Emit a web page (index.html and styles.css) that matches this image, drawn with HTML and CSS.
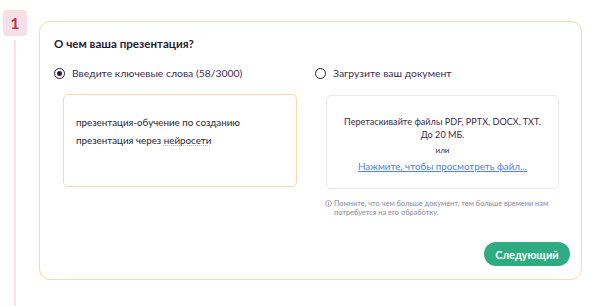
FILE: index.html
```html
<!DOCTYPE html>
<html lang="ru">
<head>
<meta charset="utf-8">
<link rel="stylesheet" href="styles.css">
</head>
<body>
<div class="page">
  <div class="rail">
    <div class="badge">1</div>
    <div class="line"></div>
  </div>
  <div class="card">
    <h2 class="title">О чем ваша презентация?</h2>
    <div class="cols">
      <div class="col">
        <label class="opt"><span class="radio on"></span>Введите ключевые слова (58/3000)</label>
        <div class="textbox">презентация-обучение по созданию презентация через <span class="typo">нейросети</span></div>
      </div>
      <div class="col col2">
        <label class="opt"><span class="radio"></span>Загрузите ваш документ</label>
        <div class="drop">
          <div class="drop-main">Перетаскивайте файлы PDF, PPTX, DOCX, TXT.<br>До 20 МБ.</div>
          <div class="drop-or">или</div>
          <a class="drop-link">Нажмите, чтобы просмотреть файл...</a>
        </div>
        <div class="note">
          <svg class="info" viewBox="0 0 10 10" width="7" height="7"><circle cx="5" cy="5" r="4.3" fill="none" stroke="#8d8597" stroke-width="1"/><rect x="4.5" y="4.2" width="1" height="3" fill="#8d8597"/><rect x="4.5" y="2.6" width="1" height="1" fill="#8d8597"/></svg>
          <span>Помните, что чем больше документ, тем больше времени нам потребуется на его обработку.</span>
        </div>
      </div>
    </div>
    <div class="actions">
      <button class="next">Следующий</button>
    </div>
  </div>
</div>
</body>
</html>
```
FILE: styles.css
```css
html, body {
  margin: 0;
  padding: 0;
  background: #ffffff;
}
body {
  font-family: Lato, "Noto Sans", sans-serif;
  width: 592px;
  height: 306px;
  overflow: hidden;
}
.page {
  display: flex;
  align-items: flex-start;
}
.rail {
  width: 24px;
  margin-left: 3px;
  padding-top: 10px;
  display: flex;
  flex-direction: column;
  align-items: center;
}
.badge {
  width: 24px;
  height: 26px;
  border-radius: 4px;
  background: #f6e0e5;
  color: #b23a55;
  font-weight: 700;
  font-size: 16px;
  line-height: 26px;
  text-align: center;
}
.line {
  width: 2px;
  height: 270px;
  margin-top: 4px;
  background: #f7e5ea;
}
.card {
  margin-left: 12px;
  margin-top: 21px;
  width: 543px;
  height: 259px;
  box-sizing: border-box;
  border: 1.5px solid #fcd9a5;
  border-radius: 11px;
  padding: 14px 12px 0 14px;
}
.title {
  margin: 0;
  font-size: 11.6px;
  font-weight: 700;
  color: #2a1838;
  line-height: 16px;
}
.cols {
  display: grid;
  grid-template-columns: 261px 1fr;
  margin-top: 14px;
}
.opt {
  display: flex;
  align-items: center;
  font-size: 10.4px;
  color: #3e2b57;
  height: 14px;
}
.radio {
  width: 9px;
  height: 9px;
  border: 1.5px solid #2b1a3d;
  border-radius: 50%;
  margin-right: 7px;
  position: relative;
  flex: none;
}
.radio.on::after {
  content: "";
  position: absolute;
  left: 2px;
  top: 2px;
  width: 5px;
  height: 5px;
  border-radius: 50%;
  background: #2b1a3d;
}
.textbox {
  margin-top: 14px;
  margin-left: 9px;
  width: 234px;
  height: 93px;
  box-sizing: border-box;
  border: 1.5px solid #fcd9a5;
  border-radius: 5px;
  padding: 18px 12px 0 12px;
  font-size: 9.8px;
  line-height: 18px;
  color: #2b2630;
}
.typo {
  text-decoration: underline dotted #eaa8a8;
  text-decoration-thickness: 1px;
  text-underline-offset: 1px;
}
.drop {
  margin-top: 15px;
  margin-left: 11px;
  width: 233px;
  height: 94px;
  box-sizing: border-box;
  border: 1px solid #ebe8ee;
  border-radius: 5px;
  display: flex;
  flex-direction: column;
  align-items: center;
  padding-top: 19px;
  text-align: center;
  color: #3a2a4e;
}
.drop-main {
  font-size: 9.1px;
  line-height: 13px;
}
.drop-or {
  font-size: 8px;
  margin-top: 4px;
  line-height: 10px;
}
.drop-link {
  margin-top: 5px;
  font-size: 9.8px;
  line-height: 12px;
  color: #4f7fea;
  text-decoration: underline;
}
.note {
  display: flex;
  align-items: flex-start;
  margin-top: 10px;
  margin-left: 10px;
  width: 236px;
  font-size: 7.4px;
  line-height: 9px;
  color: #8d8597;
}
.info {
  flex: none;
  margin-right: 2px;
  margin-top: 1px;
}
.actions {
  display: flex;
  justify-content: flex-end;
  margin-top: 25px;
}
.next {
  width: 86px;
  height: 24px;
  border: none;
  border-radius: 12px;
  background: #2fab82;
  color: #ffffff;
  font-family: Lato, "Noto Sans", sans-serif;
  font-size: 11px;
  font-weight: 700;
  padding: 0;
  margin-right: -1px;
}
```
